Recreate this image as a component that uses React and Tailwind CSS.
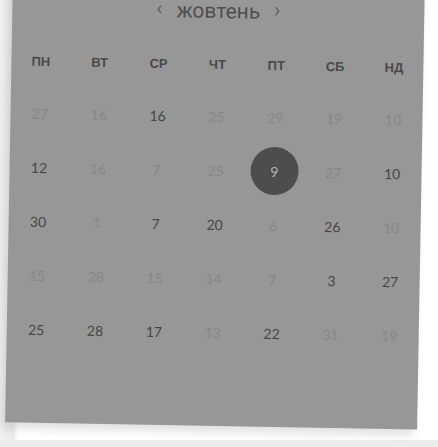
import React from "react";

const days = ["ПН", "ВТ", "СР", "ЧТ", "ПТ", "СБ", "НД"];

// d = darker (in month), f = faded, s = selected
const rows = [
    [["27", "f"], ["16", "f"], ["16", "d"], ["25", "f"], ["29", "f"], ["19", "f"], ["10", "f"]],
    [["12", "d"], ["16", "f"], ["7", "f"], ["25", "f"], ["9", "s"], ["27", "f"], ["10", "d"]],
    [["30", "d"], ["1", "f"], ["7", "d"], ["20", "d"], ["6", "f"], ["26", "d"], ["10", "f"]],
    [["15", "f"], ["28", "f"], ["15", "f"], ["14", "f"], ["7", "f"], ["3", "d"], ["27", "d"]],
    [["25", "d"], ["28", "d"], ["17", "d"], ["13", "f"], ["22", "d"], ["31", "f"], ["19", "f"]],
];

const DayCell = ({ value, kind }) => {
    if (kind === "s") {
        return (
            <div className="flex items-center justify-center h-[54px]">
                <span className="w-[48px] h-[48px] rounded-full bg-[#4d4d4d] text-[#b4b4b4] flex items-center justify-center text-[14px]">
                    {value}
                </span>
            </div>
        );
    }
    return (
        <div
            className={`flex items-center justify-center h-[54px] text-[14px] ${
                kind === "d" ? "text-[#474747]" : "text-[#878787]"
            }`}
        >
            {value}
        </div>
    );
};

export default function App() {
    return (
        <div className="h-[447px] overflow-hidden bg-[#ececec] font-['Lato','Open_Sans',sans-serif]">
            <div className="flow-root h-[440px] bg-[linear-gradient(to_right,#f1f1f1_0%,#ebebeb_3%,#ffffff_4%)]">
                <div className="-mt-[20px] ml-[9px] w-[412px] h-[446px] bg-[#979797] rotate-1 shadow-[-4px_6px_10px_rgba(0,0,0,0.12)]">
                    <div className="h-[64px] flex items-center justify-center gap-[14px] text-[#4f4f4f] font-['Roboto',sans-serif]">
                        <span className="text-[21px] font-light -mt-[4px]">‹</span>
                        <span className="text-[21px]">жовтень</span>
                        <span className="text-[21px] font-light -mt-[4px]">›</span>
                    </div>
                    <div className="grid grid-cols-7 h-[42px] items-center font-['Liberation_Sans',sans-serif] font-bold text-[13px] text-[#4a4a4a]">
                        {days.map((d) => (
                            <div key={d} className="text-center">
                                {d}
                            </div>
                        ))}
                    </div>
                    <div className="pt-[3px]">
                        {rows.map((row, i) => (
                            <div key={i} className="grid grid-cols-7">
                                {row.map(([v, k], j) => (
                                    <DayCell key={j} value={v} kind={k} />
                                ))}
                            </div>
                        ))}
                    </div>
                </div>
            </div>
        </div>
    );
}
